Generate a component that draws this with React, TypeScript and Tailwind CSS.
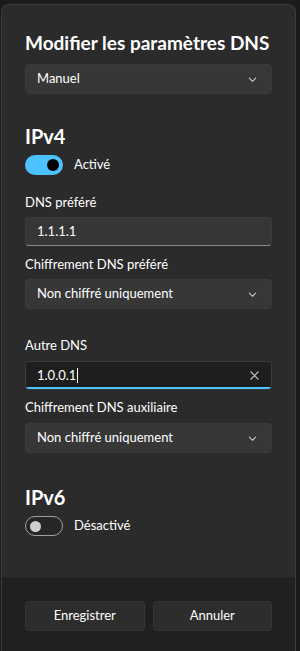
import React from "react";

const font = { fontFamily: 'Lato, "Open Sans", sans-serif' };

function Chevron() {
  return (
    <svg width="9" height="9" viewBox="0 0 10 10" fill="none">
      <path d="M1.5 3.5 L5 7 L8.5 3.5" stroke="#cfcfcf" strokeWidth="1.2" strokeLinecap="round" strokeLinejoin="round" />
    </svg>
  );
}

function Select({ value }: { value: string }) {
  return (
    <div className="flex h-[30px] items-center justify-between rounded-[4px] border border-[#3a3a3a] bg-[#373737] pl-[11px] pr-[14px] text-[13px] text-[#ffffff]">
      <span>{value}</span>
      <Chevron />
    </div>
  );
}

function Label({ children }: { children: React.ReactNode }) {
  return <div className="text-[13px] leading-[18px] text-[#ffffff]">{children}</div>;
}

function Toggle({ on, label }: { on: boolean; label: string }) {
  return (
    <div className="flex items-center gap-[11px]">
      {on ? (
        <div className="flex h-[20px] w-[38px] items-center justify-end rounded-full bg-[#4cc2ff] pr-[4px]">
          <div className="h-[12px] w-[12px] rounded-full bg-[#000000]" />
        </div>
      ) : (
        <div className="flex h-[20px] w-[38px] items-center rounded-full border border-[#a0a0a0] bg-[#262626] pl-[4px]">
          <div className="h-[11px] w-[11px] rounded-full bg-[#d0d0d0]" />
        </div>
      )}
      <span className="text-[13px] text-[#ffffff]">{label}</span>
    </div>
  );
}

export default function App() {
  return (
    <div className="h-[651px] w-[300px] overflow-hidden bg-[#1b1b1b] pl-px pr-[4px] pt-[4px]" style={font}>
      <div className="flex h-full flex-col overflow-hidden rounded-t-[8px] border border-b-0 border-[#3c3c3c] bg-[#2b2b2b]">
        <div className="flex-1 px-[23px] pt-[25px]">
          <h1 className="whitespace-nowrap text-[19px] font-bold leading-[26px] text-[#ffffff]">Modifier les paramètres DNS</h1>
          <div className="mt-[8px]">
            <Select value="Manuel" />
          </div>

          <h2 className="mt-[29px] text-[20px] font-bold leading-[26px] text-[#ffffff]">IPv4</h2>
          <div className="mt-[6px]">
            <Toggle on label="Activé" />
          </div>

          <div className="mt-[18px]">
            <Label>DNS préféré</Label>
          </div>
          <div className="mt-[6px] flex h-[29px] items-center rounded-[4px] border border-[#3a3a3a] border-b-[#8a8a8a] bg-[#363636] px-[11px] text-[13px] text-[#ffffff]">
            1.1.1.1
          </div>

          <div className="mt-[9px]">
            <Label>Chiffrement DNS préféré</Label>
          </div>
          <div className="mt-[6px]">
            <Select value="Non chiffré uniquement" />
          </div>

          <div className="mt-[27px]">
            <Label>Autre DNS</Label>
          </div>
          <div className="relative mt-[7px] flex h-[29px] items-center justify-between overflow-hidden rounded-[4px] border border-[#3a3a3a] bg-[#1e1e1e] pl-[11px] pr-[12px] text-[13px] text-[#ffffff]">
            <span className="flex items-center">
              1.0.0.1<span className="ml-px inline-block h-[15px] w-px bg-[#ffffff]" />
            </span>
            <svg width="9" height="9" viewBox="0 0 10 10">
              <path d="M1 1 L9 9 M9 1 L1 9" stroke="#d0d0d0" strokeWidth="1.3" strokeLinecap="round" />
            </svg>
            <div className="absolute bottom-0 left-0 right-0 h-[2px] bg-[#4cc2ff]" />
          </div>

          <div className="mt-[8px]">
            <Label>Chiffrement DNS auxiliaire</Label>
          </div>
          <div className="mt-[7px]">
            <Select value="Non chiffré uniquement" />
          </div>

          <h2 className="mt-[31px] text-[20px] font-bold leading-[26px] text-[#ffffff]">IPv6</h2>
          <div className="mt-[6px]">
            <Toggle on={false} label="Désactivé" />
          </div>
        </div>

        <div className="flex h-[74px] gap-[8px] border-t border-[#232323] bg-[#202020] px-[23px] pt-[23px]">
          <button className="h-[30px] flex-1 rounded-[4px] border border-[#353535] bg-[#2d2d2d] text-[13px] text-[#ffffff]">Enregistrer</button>
          <button className="h-[30px] flex-1 rounded-[4px] border border-[#353535] bg-[#2d2d2d] text-[13px] text-[#ffffff]">Annuler</button>
        </div>
      </div>
    </div>
  );
}
